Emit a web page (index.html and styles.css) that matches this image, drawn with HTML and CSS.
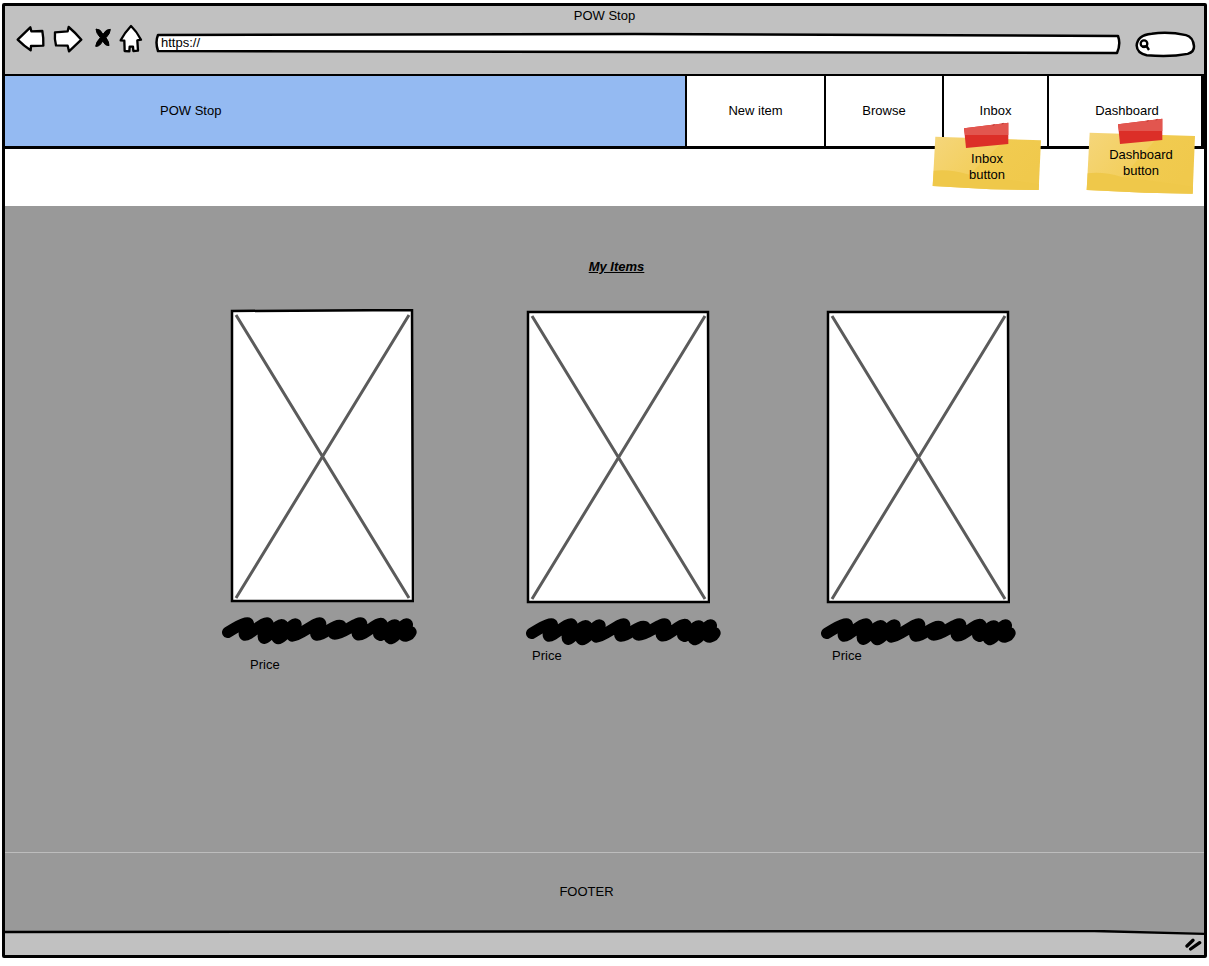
FILE: index.html
```html
<!DOCTYPE html>
<html lang="en">
<head>
<meta charset="utf-8">
<title>POW Stop</title>
<link rel="stylesheet" href="styles.css">
</head>
<body>
<div class="frame">
  <header class="chrome">
    <div class="chrome-title">POW Stop</div>
    <div class="toolbar">
      <button class="tool" type="button" aria-label="Back">
        <svg class="outline" width="30" height="30" viewBox="48 72 90 90"><path d="M53 119 L91 82 L94 94 L127 93 Q131 114 130 137 L93 138 L92 151 Q72 138 53 119Z"/></svg>
      </button>
      <button class="tool" type="button" aria-label="Forward">
        <svg class="outline" width="30" height="30" viewBox="156 72 90 90"><path d="M165 97 L203 94 L206 81 Q226 98 244 119 L207 154 L203 137 L168 136 Q163 118 165 97Z"/></svg>
      </button>
      <button class="tool" type="button" aria-label="Stop">
        <svg class="cross" width="24" height="30" viewBox="264 72 72 90"><path d="M288 87 Q301 86 309 103 Q318 87 331 88 Q331 101 318 113 Q328 126 327 137 Q315 138 308 123 Q299 141 287 139 Q288 126 301 113 Q288 99 288 87Z"/></svg>
      </button>
      <button class="tool" type="button" aria-label="Home">
        <svg class="outline" width="26" height="30" viewBox="354 72 78 90"><path d="M393 78 Q410 94 423 119 L412 121 L414 152 L400 153 L399 140 L389 140 L388 154 L374 153 L373 122 L362 121 Q374 98 393 78Z"/></svg>
      </button>
      <div class="field address">
        <svg class="field-shape" viewBox="0 0 965 22" preserveAspectRatio="none"><path d="M3 2 L480 1 L963 3 Q966 11 962 20 L480 19 L3 18 Q0 9 3 2Z"/></svg>
        <input class="field-input" type="text" value="https://" aria-label="Address">
      </div>
      <div class="field search">
        <svg class="field-shape" viewBox="408 93 177 72" preserveAspectRatio="none"><path d="M410 132 Q412 102 455 98 Q505 91 558 102 Q579 107 582 134 Q583 150 563 156 Q510 166 440 160 Q411 154 410 132Z"/></svg>
        <svg class="lens" width="12" height="13" viewBox="418 116 36 39"><circle cx="433" cy="130" r="10"/><path d="M427 139 L441 138 L448 149"/></svg>
        <input class="field-input" type="search" aria-label="Search">
      </div>
    </div>
  </header>

  <nav class="site-nav">
    <a class="brand" href="#">POW Stop</a>
    <a class="nav-item new-item" href="#">New item</a>
    <a class="nav-item browse" href="#">Browse</a>
    <div class="nav-item inbox">
      <a href="#">Inbox</a>
      <div class="note note-inbox">
        <svg class="note-art" width="110" height="70" viewBox="38 36 330 210">
          <defs><linearGradient id="paper" x1="0" y1="0" x2="1" y2="0.5"><stop offset="0" stop-color="#f5d67b"/><stop offset=".55" stop-color="#f3cf5e"/><stop offset=".56" stop-color="#f1cb50"/><stop offset="1" stop-color="#f0c94c"/></linearGradient></defs>
          <path fill="url(#paper)" d="M48 80 L365 91 L358 240 L215 238 L40 228Z"/>
          <path fill="#efc84a" d="M43 182 Q90 176 145 193 Q245 205 359 222 L358 240 L215 238 L40 228Z"/>
          <path fill="#dc2f28" d="M134 55 L267 38 L267 102 L140 114Z"/>
          <path fill="#e2564f" d="M134 55 L267 38 L267 75 L137 75Z"/>
          <path stroke="#b93631" stroke-width="3" d="M220 46 L226 44 M247 42 L253 40"/>
        </svg>
        <span class="note-text">Inbox<br>button</span>
      </div>
    </div>
    <div class="nav-item dashboard">
      <a href="#">Dashboard</a>
      <div class="note note-dashboard">
        <svg class="note-art" width="110" height="76" viewBox="38 36 330 228">
          <path fill="url(#paper)" d="M49 80 L365 90 L358 263 L215 260 L40 252Z"/>
          <path fill="#efc84a" d="M43 202 Q90 196 145 213 Q245 225 359 242 L358 263 L215 260 L40 252Z"/>
          <path fill="#dc2f28" d="M134 55 L267 38 L267 102 L140 114Z"/>
          <path fill="#e2564f" d="M134 55 L267 38 L267 75 L137 75Z"/>
          <path stroke="#b93631" stroke-width="3" d="M220 46 L226 44 M247 42 L253 40"/>
        </svg>
        <span class="note-text">Dashboard<br>button</span>
      </div>
    </div>
  </nav>

  <div class="band"></div>

  <main class="content">
    <h1 class="heading">My Items</h1>
    <div class="items">
      <article class="item item-first">
        <svg class="picture" width="184" height="294" viewBox="0 0 184 294"><path class="picture-frame" d="M2 2 L182 1 L183 292 L2 292Z"/><path class="picture-cross" d="M6 6 L179 289 M179 6 L6 289"/></svg>
        <svg class="scribble" width="196" height="28" viewBox="20 84 588 84"><path id="scrawl" d="M37 130 C60 116 96 95 99 104 C100 115 81 128 88 138 C100 142 151 91 158 104 C158 115 137 140 146 148 C162 146 190 97 203 109 C204 120 178 142 188 149 C206 148 232 97 242 106 C243 118 218 132 231 141 C252 142 308 92 316 104 C316 116 295 128 303 138 C320 142 362 103 376 110 C376 120 344 130 357 135 C380 138 431 92 439 104 C439 116 418 126 428 137 C446 142 490 94 500 105 C500 118 480 134 496 139 C512 134 530 102 541 109 C540 124 512 144 526 149 C548 144 564 98 576 106 C578 120 552 142 572 141 Q584 138 587 129"/></svg>
        <p class="price">Price</p>
      </article>
      <article class="item item-second">
        <svg class="picture" width="184" height="294" viewBox="0 0 184 294"><path class="picture-frame" d="M2 2 L182 2 L183 292 L2 292Z"/><path class="picture-cross" d="M6 6 L179 289 M179 6 L6 289"/></svg>
        <svg class="scribble" width="196" height="28" viewBox="20 84 588 84"><use href="#scrawl"/></svg>
        <p class="price">Price</p>
      </article>
      <article class="item item-third">
        <svg class="picture" width="184" height="294" viewBox="0 0 184 294"><path class="picture-frame" d="M2 2 L182 2 L183 292 L2 292Z"/><path class="picture-cross" d="M6 6 L179 289 M179 6 L6 289"/></svg>
        <svg class="scribble" width="196" height="28" viewBox="20 84 588 84"><use href="#scrawl"/></svg>
        <p class="price">Price</p>
      </article>
    </div>
  </main>

  <footer class="footer">FOOTER</footer>
  <div class="status">
    <svg class="status-shape" viewBox="0 0 1200 26" preserveAspectRatio="none"><path class="status-fill" d="M0 2 L1090 1 L1200 4 L1200 26 L0 26Z"/><path class="status-line" d="M0 2 L1090 1 L1200 4"/></svg>
    <svg class="grip" width="18" height="14" viewBox="257 297 54 42"><path d="M263 321 L281 304 M274 330 L301 311"/></svg>
  </div>
</div>
</body>
</html>
```
FILE: styles.css
```css
* {
  box-sizing: border-box;
}

body {
  margin: 0;
  padding: 3px 2px 8px;
  min-height: 100vh;
  display: flex;
  background: #fff;
  color: #000;
  font: 13px/16px "Liberation Sans", Arial, sans-serif;
}

a {
  color: inherit;
  text-decoration: none;
}

svg {
  display: block;
}

.frame {
  flex: 1;
  display: flex;
  flex-direction: column;
  border: 3px solid #000;
  border-radius: 2px;
}

.chrome {
  background: #c1c1c1;
  border-bottom: 2px solid #000;
  padding-bottom: 10px;
}

.chrome-title {
  height: 18px;
  line-height: 20px;
  text-align: center;
}

.toolbar {
  display: flex;
  align-items: center;
  gap: 6px;
  height: 40px;
  padding: 0 9px 0 11px;
}

.tool {
  align-self: flex-start;
  padding: 0;
  border: 0;
  background: none;
}

.tool svg {
  overflow: visible;
}

.outline path {
  fill: #fff;
  stroke: #000;
  stroke-width: 7;
  stroke-linejoin: round;
}

.cross path {
  stroke: #000;
  stroke-width: 3;
  stroke-linejoin: round;
}

.field {
  position: relative;
}

.address {
  flex: 1;
  height: 22px;
  margin-left: 5px;
}

.search {
  width: 59px;
  height: 25px;
  margin-left: 10px;
}

.field-shape {
  position: absolute;
  inset: 0;
  width: 100%;
  height: 100%;
  overflow: visible;
}

.field-shape path {
  fill: #fff;
  stroke: #000;
  stroke-width: 2.5;
  stroke-linejoin: round;
  vector-effect: non-scaling-stroke;
}

.field-input {
  position: relative;
  width: 100%;
  height: 100%;
  padding: 0 6px 4px;
  border: 0;
  outline: 0;
  background: none;
  font: inherit;
}

.lens {
  position: absolute;
  left: 3px;
  top: 7px;
}

.lens circle,
.lens path {
  fill: none;
  stroke: #000;
  stroke-width: 7;
}

.site-nav {
  display: flex;
  height: 73px;
  border-bottom: 3px solid #000;
  border-right: 3px solid #000;
  background: #fff;
}

.brand {
  flex: 525 1 0;
  display: flex;
  align-items: center;
  padding-left: 155px;
  background: #94baf2;
}

.nav-item {
  position: relative;
  display: flex;
  align-items: center;
  justify-content: center;
  border-left: 2px solid #000;
}

.new-item {
  flex: 137 1 0;
}

.browse {
  flex: 116 1 0;
}

.inbox {
  flex: 103 1 0;
}

.dashboard {
  flex: 148 1 0;
  padding-left: 4px;
}

.note {
  position: absolute;
  right: 5px;
  width: 110px;
}

.note-inbox {
  top: 46px;
}

.note-dashboard {
  top: 42px;
}

.note-text {
  position: absolute;
  top: 29px;
  left: 0;
  width: 100%;
  text-align: center;
}

.band {
  height: 57px;
  background: #fff;
}

.content {
  flex: 1;
  padding: 53px 0 40px;
  background: #999;
}

.heading {
  margin: 0 0 34px;
  padding-left: 24px;
  font-size: 13px;
  line-height: 16px;
  font-style: italic;
  text-align: center;
  text-decoration: underline;
}

.items {
  display: flex;
  justify-content: center;
  gap: 112px;
  padding-left: 31px;
}

.item {
  width: 184px;
  padding-top: 1px;
}

.item-first {
  padding-top: 0;
}

.item-third {
  margin-left: 4px;
}

.picture-frame {
  fill: #fff;
  stroke: #000;
  stroke-width: 2.5;
}

.picture-cross {
  stroke: #5b5b5b;
  stroke-width: 3;
}

.scribble {
  margin: 14px 0 2px;
}

.scribble path {
  fill: none;
  stroke: #000;
  stroke-width: 34;
  stroke-linecap: round;
  stroke-linejoin: round;
}

.item-first .scribble {
  margin-left: -8px;
}

.item-third .scribble {
  margin-left: -5px;
}

.price {
  margin: 0;
  padding-left: 6px;
}

.item-first .price {
  padding: 10px 0 0 20px;
}

.footer {
  height: 78px;
  padding-right: 36px;
  border-top: 1px solid #bdbdbd;
  background: #999;
  line-height: 78px;
  text-align: center;
}

.status {
  position: relative;
  display: flex;
  justify-content: flex-end;
  align-items: center;
  height: 25px;
  padding: 4px 1px 0 0;
  background: #999;
}

.status-shape {
  position: absolute;
  inset: 0;
  width: 100%;
  height: 100%;
}

.status-fill {
  fill: #c1c1c1;
}

.status-line {
  fill: none;
  stroke: #000;
  stroke-width: 2.5;
}

.grip {
  position: relative;
}

.grip path {
  stroke: #000;
  stroke-width: 10;
  stroke-linecap: round;
}
```
